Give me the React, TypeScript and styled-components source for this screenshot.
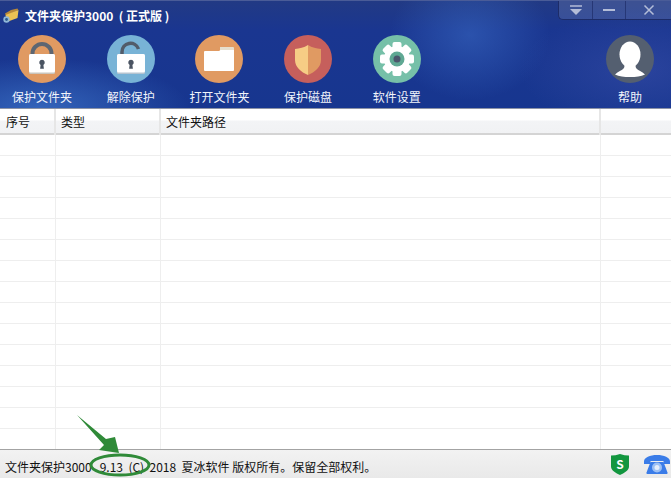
import React from "react";
import styled, { createGlobalStyle } from "styled-components";

const FONT = `"Noto Sans CJK SC", "Liberation Sans", sans-serif`;

const Global = createGlobalStyle`
  html, body { margin: 0; padding: 0; background: #fff; }
  body { font-family: ${FONT}; font-size: 12px; }
`;

const Window = styled.div`
  position: relative;
  width: 671px;
  height: 478px;
  display: flex;
  flex-direction: column;
  overflow: hidden;
  background: #fff;
`;

const Header = styled.header`
  height: 108px;
  flex: none;
  display: flex;
  flex-direction: column;
  border-bottom: 1px solid #8c93a6;
  background:
    radial-gradient(ellipse 80px 65px at 470px 35px, rgba(60, 110, 200, 0.5), transparent),
    radial-gradient(ellipse 150px 50px at 40px 108px, rgba(70, 130, 215, 0.6), transparent),
    radial-gradient(ellipse 120px 60px at 640px 70px, rgba(60, 80, 170, 0.5), transparent),
    linear-gradient(180deg, #223a84 0, #1a3690 30px, #17368f 100%);
`;

const TitleBar = styled.div`
  height: 35px;
  flex: none;
  display: flex;
  align-items: flex-start;
  justify-content: space-between;
  border-top: 1px solid #4a5c98;
  box-sizing: border-box;
`;

const Title = styled.div`
  display: flex;
  align-items: center;
  gap: 6px;
  padding: 6px 0 0 3px;
  color: #fff;
  font-weight: 700;
  font-size: 12px;
  line-height: 17px;
  white-space: pre;
`;

const WinButtons = styled.div`
  display: flex;
  height: 18px;
  border: 1px solid #1d2c68;
  border-top: none;
  border-right: none;
  border-bottom-left-radius: 5px;
  background: rgba(255, 255, 255, 0.12);
`;

const WinButton = styled.div<{ $w: number }>`
  width: ${(p) => p.$w}px;
  display: flex;
  align-items: center;
  justify-content: center;
  & + & { border-left: 1px solid rgba(30, 44, 104, 0.7); }
`;

const Toolbar = styled.div`
  flex: 1;
  display: flex;
  padding: 0 11px 0 12px;
  gap: 28.7px;
`;

const Tool = styled.div<{ $push?: boolean }>`
  width: 60px;
  display: flex;
  flex-direction: column;
  align-items: center;
  gap: 5px;
  margin-left: ${(p) => (p.$push ? "auto" : "0")};
  color: #f1f4fb;
  font-size: 12px;
  line-height: 18px;
  white-space: nowrap;
  svg { display: block; }
`;

const Table = styled.div`
  flex: 1;
  display: flex;
  flex-direction: column;
  overflow: hidden;
`;

const COLS = "56px 105px 440px 1fr";

const HeadRow = styled.div`
  height: 24px;
  flex: none;
  display: grid;
  grid-template-columns: ${COLS};
  border-bottom: 2px solid #d4d4d4;
  box-sizing: content-box;
  background: linear-gradient(180deg, #fff 0, #fff 11px, #f3f4f6 12px, #f1f2f4 100%);
`;

const HeadCell = styled.div`
  padding-left: 5px;
  line-height: 26px;
  font-size: 12px;
  color: #111;
  border-right: 2px solid #e6e6e6;
  box-sizing: border-box;
  &:first-child { padding-left: 6px; }
  &:last-child { border-right: none; }
`;

const Row = styled.div`
  height: 21px;
  flex: none;
  display: grid;
  grid-template-columns: ${COLS};
  border-bottom: 1px solid #eee;
  box-sizing: border-box;
`;

const Cell = styled.div`
  border-right: 1px solid #eee;
  &:last-child { border-right: none; }
`;

const StatusBar = styled.footer`
  height: 29px;
  flex: none;
  display: flex;
  align-items: center;
  justify-content: space-between;
  padding: 0 1px 0 5px;
  box-sizing: border-box;
  border-top: 1px solid #a3a3a3;
  background: linear-gradient(180deg, #f2f2f2, #e9e9e9);
  font-size: 12px;
  color: #111;
  white-space: pre;
`;

const StatusText = styled.div`
  padding-top: 4px;
`;

const StatusIcons = styled.div`
  display: flex;
  align-items: center;
  gap: 15px;
`;

const Annotation = styled.svg`
  position: absolute;
  left: 70px;
  top: 410px;
`;

const Badge = ({ color, children }: { color: string; children: React.ReactNode }) => (
  <svg width="48" height="48" viewBox="0 0 48 48">
    <circle cx="24" cy="24" r="24" fill={color} />
    {children}
  </svg>
);

const Keyhole = ({ x, y }: { x: number; y: number }) => (
  <path
    d={`M${x} ${y - 3.2}a2.8 2.8 0 0 1 1.4 5.2l.5 3.8h-3.8l.5-3.8a2.8 2.8 0 0 1 1.4-5.2z`}
    fill="#4a5462"
  />
);

const LockIcon = () => (
  <Badge color="#e09a62">
    <path d="M14.500 20v-1.500a9.500 9.500 0 0 1 19 0V20" fill="none" stroke="#5d6672" strokeWidth="4" />
    <rect x="11" y="19" width="26" height="20" rx="1.500" fill="#c9c4bb" />
    <rect x="11" y="19" width="26" height="18.500" rx="1.500" fill="#fff" />
    <Keyhole x={24} y={28} />
  </Badge>
);

const UnlockIcon = () => (
  <Badge color="#78b3d6">
    <path d="M15 19v-2a8.500 8.500 0 0 1 16.500-3" fill="none" stroke="#525c6a" strokeWidth="3.500" />
    <rect x="10" y="19" width="28" height="20" rx="1.500" fill="#b5c4d0" />
    <rect x="10" y="19" width="28" height="18.500" rx="1.500" fill="#fff" />
    <Keyhole x={24} y={28} />
  </Badge>
);

const FolderIcon = () => (
  <Badge color="#e09a62">
    <path d="M25 12h13a1 1 0 0 1 1 1v5H25z" fill="#e6dfcd" />
    <path d="M9 17a1 1 0 0 1 1-1h14l1.500-1H39v20a1 1 0 0 1-1 1H10a1 1 0 0 1-1-1z" fill="#fff" />
  </Badge>
);

const ShieldIcon = () => (
  <Badge color="#c65f5c">
    <path d="M24 10c-4 2.600-8.500 3.700-13 4v11c0 7 6 12 13 15z" fill="#f6cd85" />
    <path d="M24 10c4 2.600 8.500 3.700 13 4v11c0 7-6 12-13 15z" fill="#e09a62" />
  </Badge>
);

const GearIcon = () => (
  <Badge color="#76c0a8">
    {[0, 45, 90, 135, 180, 225, 270, 315].map((a) => (
      <rect key={a} x="19.500" y="7" width="9" height="8" rx="2" fill="#fff" transform={`rotate(${a} 24 24)`} />
    ))}
    <circle cx="24" cy="24" r="13" fill="#fff" />
    <circle cx="24" cy="24" r="7.500" fill="#5fa893" />
    <circle cx="24" cy="24" r="3.500" fill="#4b566c" />
  </Badge>
);

const PersonIcon = () => (
  <Badge color="#545f70">
    <ellipse cx="24" cy="19.500" rx="10.500" ry="13" fill="#fff" />
    <path d="M19 29l-1 4c-2 2.500-6 3.500-9 6.500 4 2 9 2.500 15 2.500s11-.5 15-2.500c-3-3-7-4-9-6.500l-1-4z" fill="#fff" />
  </Badge>
);

const TitleIcon = () => (
  <svg width="16" height="15" viewBox="0 0 16 15">
    <path d="M2 5.500L8 2l6.500-1.500.8 1.500L3 8z" fill="#b8893a" />
    <path d="M2.500 7L15.500 2l-1 8L5 13.500z" fill="#ecc254" />
    <circle cx="3.500" cy="11.500" r="3.200" fill="#8fb7d8" />
    <circle cx="3.500" cy="11.500" r="1.400" fill="#2d5b8e" />
  </svg>
);

const ShieldBadge = () => (
  <svg width="18" height="21" viewBox="0 0 18 21">
    <path d="M0 1.500C3 1.500 6 1 9 0c3 1 6 1.500 9 1.500v11c0 4-5 6.500-9 8.500-4-2-9-4.500-9-8.500z" fill="#12963f" />
    <text x="9" y="14.500" textAnchor="middle" fontSize="12" fontWeight="700" fill="#fff" fontFamily={FONT}>S</text>
  </svg>
);

const PhoneIcon = () => (
  <svg width="26" height="19" viewBox="0 0 26 19">
    <path d="M0 6.500C0 2.500 6 0 13 0s13 2.500 13 6.500V9h-6.500V6h-13v3H0z" fill="#3a7ce8" />
    <path d="M6.500 7h13l4 10.500a1 1 0 0 1-1 1.500h-19a1 1 0 0 1-1-1.500z" fill="#3a7ce8" />
    <circle cx="13" cy="12.500" r="5" fill="#9cc0f5" />
    <circle cx="13" cy="12.500" r="2.500" fill="#e4eefc" />
  </svg>
);

const tools = [
  { label: "保护文件夹", icon: <LockIcon /> },
  { label: "解除保护", icon: <UnlockIcon /> },
  { label: "打开文件夹", icon: <FolderIcon /> },
  { label: "保护磁盘", icon: <ShieldIcon /> },
  { label: "软件设置", icon: <GearIcon /> },
];

const rows = Array.from({ length: 15 }, (_, i) => i);

export default function App() {
  return (
    <Window>
      <Global />
      <Header>
        <TitleBar>
          <Title>
            <TitleIcon />
            文件夹保护3000  ( 正式版 )
          </Title>
          <WinButtons>
            <WinButton $w={33}>
              <svg width="14" height="10" viewBox="0 0 14 10">
                <path d="M1 1h12" stroke="#b4bdd8" strokeWidth="1.500" />
                <path d="M1 4h12l-6 6z" fill="#b4bdd8" />
              </svg>
            </WinButton>
            <WinButton $w={32}>
              <svg width="14" height="4" viewBox="0 0 14 4">
                <path d="M1 2h12" stroke="#b4bdd8" strokeWidth="2" />
              </svg>
            </WinButton>
            <WinButton $w={45}>
              <svg width="12" height="12" viewBox="0 0 12 12">
                <path d="M1.500 1.500l9 9M10.500 1.500l-9 9" stroke="#b4bdd8" strokeWidth="1.500" />
              </svg>
            </WinButton>
          </WinButtons>
        </TitleBar>
        <Toolbar>
          {tools.map((t) => (
            <Tool key={t.label}>
              {t.icon}
              {t.label}
            </Tool>
          ))}
          <Tool $push>
            <PersonIcon />
            帮助
          </Tool>
        </Toolbar>
      </Header>
      <Table>
        <HeadRow>
          <HeadCell>序号</HeadCell>
          <HeadCell>类型</HeadCell>
          <HeadCell>文件夹路径</HeadCell>
          <HeadCell />
        </HeadRow>
        {rows.map((i) => (
          <Row key={i}>
            <Cell />
            <Cell />
            <Cell />
            <Cell />
          </Row>
        ))}
      </Table>
      <StatusBar>
        <StatusText>文件夹保护3000   9.13  (C)  2018  夏冰软件 版权所有。保留全部权利。</StatusText>
        <StatusIcons>
          <ShieldBadge />
          <PhoneIcon />
        </StatusIcons>
      </StatusBar>
      <Annotation width="90" height="68" viewBox="70 410 90 68">
        <path d="M77 415l29 24 9-2 4 16-20-3 5-5z" fill="#2f8a38" />
        <ellipse cx="120" cy="465" rx="29" ry="10" fill="none" stroke="#2f8a38" strokeWidth="3" />
      </Annotation>
    </Window>
  );
}
